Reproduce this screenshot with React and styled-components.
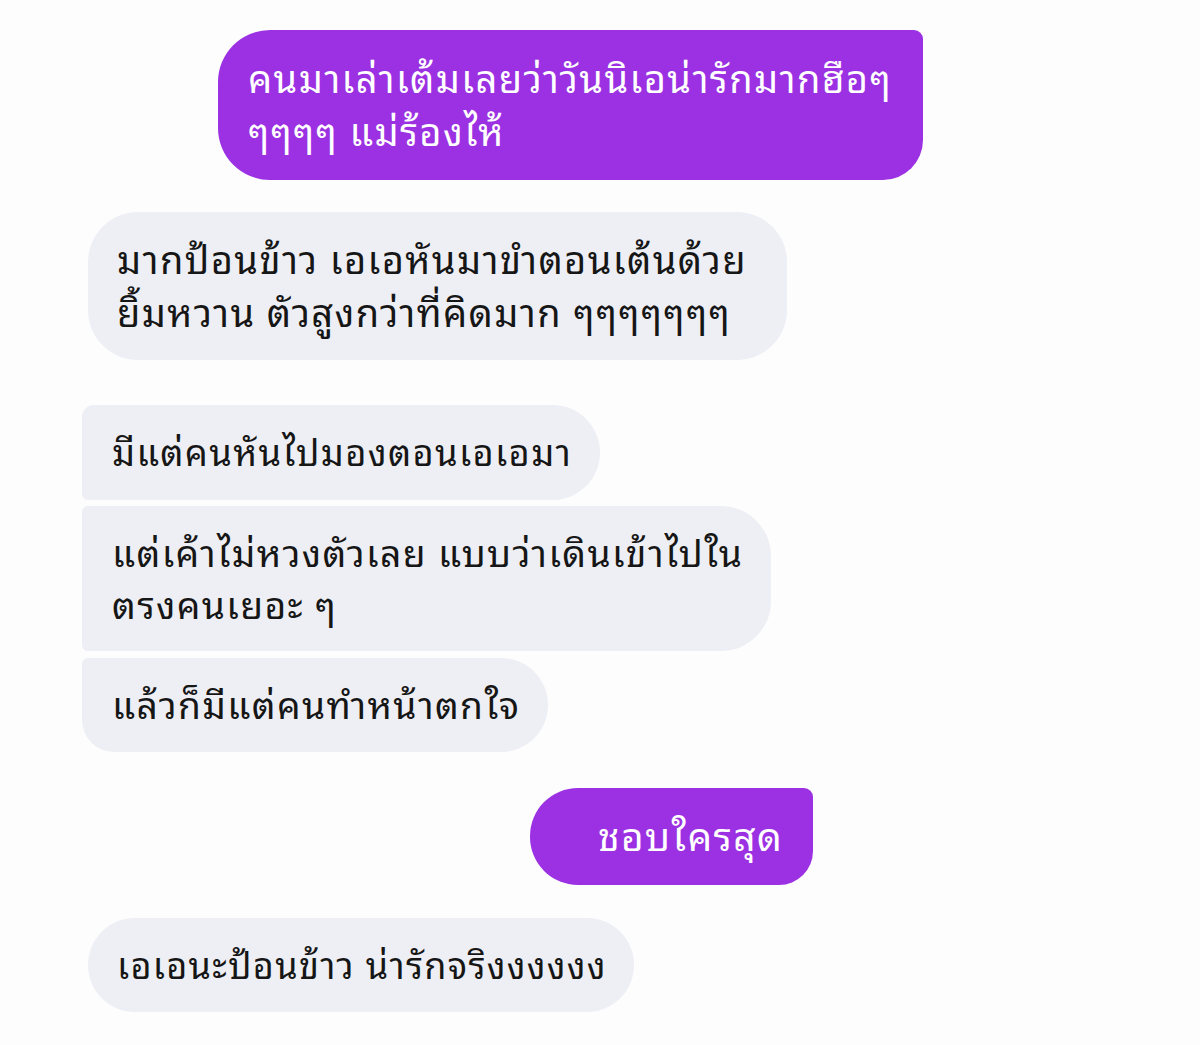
import React from "react";
import styled, { createGlobalStyle } from "styled-components";

const GlobalStyle = createGlobalStyle`
    html, body {
        margin: 0;
        padding: 0;
        background: #fdfdfe;
    }
    body {
        font-family: "Noto Sans Thai Looped", "Loma", "Garuda", "Noto Serif Thai", "Noto Sans Thai", "Noto Sans", sans-serif;
    }
`;

const messages = [
    { id: 1, mine: true, left: 218, width: 705, height: 150, gap: 30, padLeft: 30, size: 38, radius: "52px 9px 40px 52px",
      lines: ["คนมาเล่าเต้มเลยว่าวันนิเอน่ารักมากฮือๆ", "ๆๆๆๆ แม่ร้องไห้"] },
    { id: 2, left: 88, width: 699, height: 148, gap: 32, padLeft: 29, size: 38, radius: "50px",
      lines: ["มากป้อนข้าว เอเอหันมาขำตอนเต้นด้วย", "ยิ้มหวาน ตัวสูงกว่าที่คิดมาก ๆๆๆๆๆๆๆ"] },
    { id: 3, left: 82, width: 518, height: 95, gap: 45, padLeft: 30, size: 36.3, radius: "12px 48px 48px 6px",
      lines: ["มีแต่คนหันไปมองตอนเอเอมา"] },
    { id: 4, left: 82, width: 689, height: 145, gap: 6, padLeft: 30, size: 37.2, radius: "6px 50px 50px 6px",
      lines: ["แต่เค้าไม่หวงตัวเลย แบบว่าเดินเข้าไปใน", "ตรงคนเยอะ ๆ"] },
    { id: 5, left: 82, width: 466, height: 94, gap: 7, padLeft: 30, size: 37.2, radius: "6px 47px 47px 32px",
      lines: ["แล้วก็มีแต่คนทำหน้าตกใจ"] },
    { id: 6, mine: true, left: 530, width: 283, height: 97, gap: 36, padLeft: 68, size: 38.8, radius: "48px 9px 34px 48px",
      lines: ["ชอบใครสุด"] },
    { id: 7, left: 88, width: 546, height: 94, gap: 33, padLeft: 29, size: 36, radius: "47px",
      lines: ["เอเอนะป้อนข้าว น่ารักจริงงงงงง"] },
];

export default function App() {
    return (
        <>
            <GlobalStyle />
            <Thread>
                {messages.map(m => (
                    <Bubble
                        key={m.id}
                        $mine={m.mine}
                        $left={m.left}
                        $width={m.width}
                        $height={m.height}
                        $gap={m.gap}
                        $padLeft={m.padLeft}
                        $size={m.size}
                        $radius={m.radius}
                    >
                        <Text>
                            {m.lines.map((line, i) => (
                                <React.Fragment key={i}>
                                    {i > 0 && <br />}
                                    {line}
                                </React.Fragment>
                            ))}
                        </Text>
                    </Bubble>
                ))}
            </Thread>
        </>
    );
}

const Thread = styled.div`
    display: flex;
    flex-direction: column;
    align-items: flex-start;
    width: 1200px;
    min-height: 1045px;
    box-sizing: border-box;
`;

const Bubble = styled.div`
    display: flex;
    flex-direction: column;
    justify-content: center;
    box-sizing: border-box;
    margin-top: ${p => p.$gap}px;
    margin-left: ${p => p.$left}px;
    width: ${p => p.$width}px;
    height: ${p => p.$height}px;
    padding-left: ${p => p.$padLeft}px;
    padding-bottom: 4px;
    border-radius: ${p => p.$radius};
    background: ${p => (p.$mine ? "#9b31e2" : "#eeeff4")};
    color: ${p => (p.$mine ? "#ffffff" : "#161616")};
    font-size: ${p => p.$size}px;
`;

const Text = styled.p`
    margin: 0;
    line-height: 1.39;
    white-space: nowrap;
    letter-spacing: 0.037em;
`;
